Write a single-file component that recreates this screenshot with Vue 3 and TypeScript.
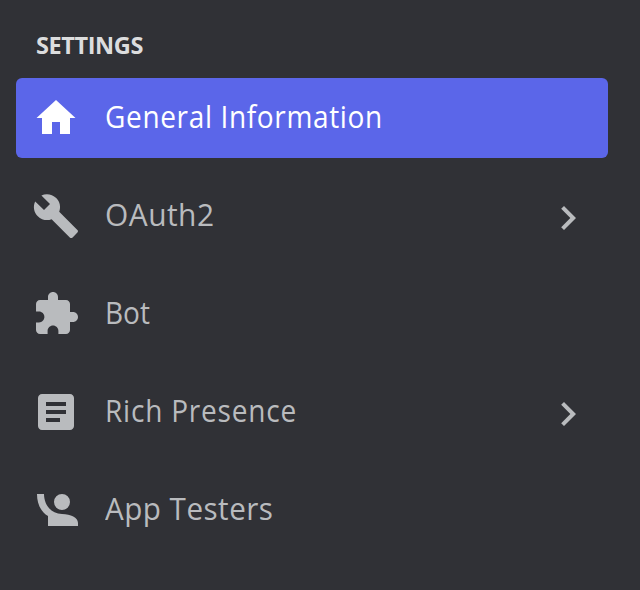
<script setup lang="ts">
interface NavItem {
  label: string
  icon: string
  slug: string
  active?: boolean
  expandable?: boolean
}

const items: NavItem[] = [
  {
    label: 'General Information',
    slug: 'general',
    icon: 'M10 20v-6h4v6h5v-8h2.75L12 3 2.25 12H5v8z',
    active: true,
  },
  {
    label: 'OAuth2',
    slug: 'oauth',
    icon: 'M22.7 19l-9.1-9.1c.9-2.3.4-5-1.5-6.9-2-2-5-2.4-7.4-1.3L9 6 6 9 1.6 4.7C.4 7.1.9 10.1 2.9 12.1c1.9 1.9 4.6 2.4 6.9 1.5l9.1 9.1c.4.4 1 .4 1.4 0l2.3-2.3c.5-.4.5-1.1.1-1.4z',
    expandable: true,
  },
  {
    label: 'Bot',
    slug: 'bot',
    icon: 'M20.5 11H19V7c0-1.1-.9-2-2-2h-4V3.5C13 2.12 11.88 1 10.5 1S8 2.12 8 3.5V5H4c-1.1 0-1.99.9-1.99 2v3.8H3.5c1.49 0 2.7 1.21 2.7 2.7s-1.21 2.7-2.7 2.7H2V20c0 1.1.9 2 2 2h3.8v-1.5c0-1.49 1.21-2.7 2.7-2.7s2.7 1.21 2.7 2.7V22H17c1.1 0 2-.9 2-2v-4h1.5c1.38 0 2.5-1.12 2.5-2.5S21.88 11 20.5 11z',
  },
  {
    label: 'Rich Presence',
    slug: 'presence',
    icon: 'M19 3H5c-1.1 0-2 .9-2 2v14c0 1.1.9 2 2 2h14c1.1 0 2-.9 2-2V5c0-1.1-.9-2-2-2zm-5 14H7v-2h7v2zm3-4H7v-2h10v2zm0-4H7V7h10v2z',
    expandable: true,
  },
  {
    label: 'App Testers',
    slug: 'testers',
    icon: 'M15 4a4 4 0 1 1 0 8 4 4 0 0 1 0-8zM2.5 4H6c0 5 3.2 9.8 9 10 4.4.15 8 1.6 8 4.5V20H8v-5C4.2 12.8 2.5 8.6 2.5 4z',
  },
]
</script>

<template>
  <nav class="sidebar">
    <h2 class="heading">SETTINGS</h2>
    <ul class="list">
      <li v-for="item in items" :key="item.slug" class="item" :class="[item.slug, { active: item.active }]">
        <svg class="icon" viewBox="0 0 24 24"><path :d="item.icon" /></svg>
        <span class="label">{{ item.label }}</span>
        <svg v-if="item.expandable" class="chevron" viewBox="0 0 24 24">
          <path d="M10 6L8.59 7.41 13.17 12l-4.58 4.59L10 18l6-6z" />
        </svg>
      </li>
    </ul>
  </nav>
</template>

<style>
body {
  background: #303136;
}
</style>

<style scoped>
.sidebar {
  box-sizing: border-box;
  height: 590px;
  padding: 29px 32px 0 16px;
  background: #303136;
  font-family: 'Open Sans', 'Noto Sans', sans-serif;
}
.heading {
  margin: 0 0 17px;
  padding-left: 20px;
  color: #dcddde;
  font-size: 23.5px;
  font-weight: 700;
  line-height: 32px;
  letter-spacing: -0.4px;
}
.list {
  display: flex;
  flex-direction: column;
  gap: 18px;
  margin: 0;
  padding: 0;
  list-style: none;
}
.item {
  box-sizing: border-box;
  display: flex;
  align-items: center;
  height: 80px;
  padding: 0 16px;
  border-radius: 6px;
  color: #b9bbbe;
  fill: currentColor;
}
.active {
  background: #5b66e9;
  color: #fff;
}
.icon,
.chevron {
  flex: none;
  width: 48px;
  height: 48px;
}
.label {
  flex: 1;
  margin: 0 0 5px 24.5px;
  font-size: 31.5px;
  line-height: 40px;
  white-space: nowrap;
  transform: scaleX(0.89);
  transform-origin: left;
}
/* Narrowed letterforms with looser tracking */
.general .label {
  letter-spacing: 0.71px;
}
.oauth .label {
  letter-spacing: 0.5px;
  transform: scaleX(0.95);
}
.presence .label {
  letter-spacing: 0.88px;
}
.testers .label {
  letter-spacing: 0.52px;
  transform: scaleX(0.94);
}
.chevron {
  margin-top: 3px;
}
</style>
